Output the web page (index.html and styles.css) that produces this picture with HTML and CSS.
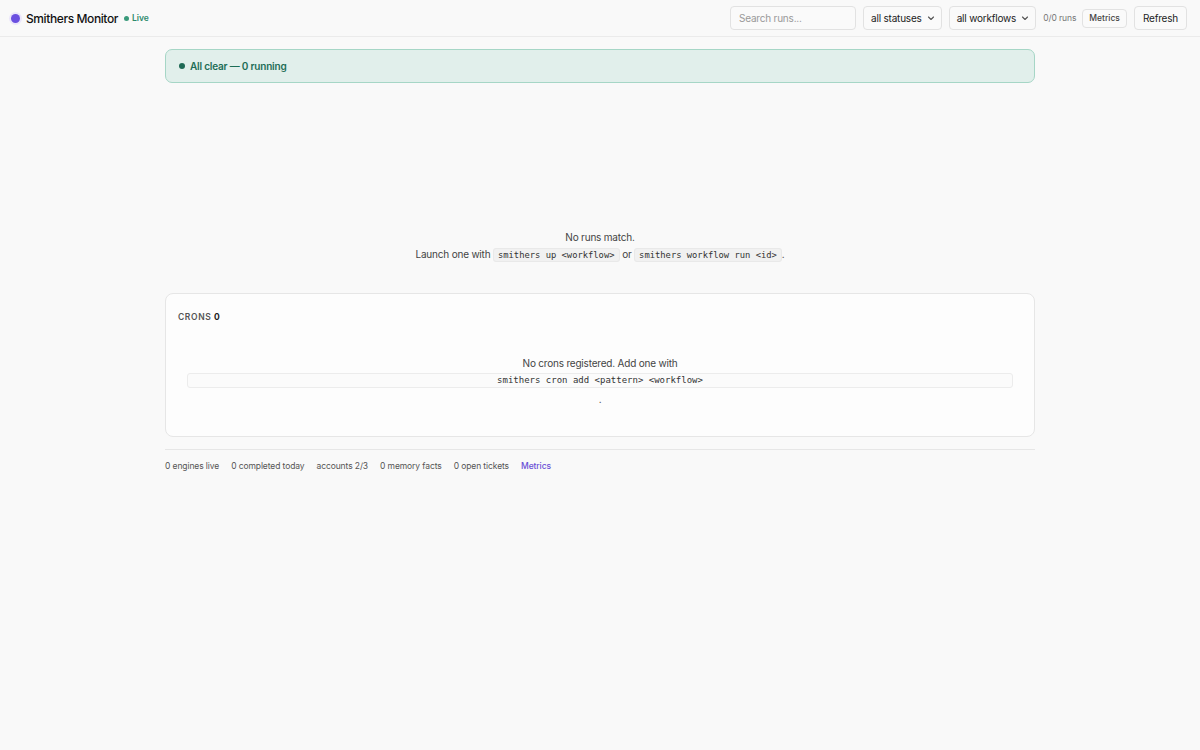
FILE: index.html
```
<!doctype html>
<html>
<head>
<meta charset="utf-8">
<title>Smithers Monitor</title>
<link rel="stylesheet" href="styles.css">
</head>
<body>
<header class="topbar">
	<div class="brand">
		<span class="brand-dot"></span>
		<span class="brand-name">Smithers Monitor</span>
		<span class="live"><span class="live-dot"></span>Live</span>
	</div>
	<div class="controls">
		<input class="search" type="text" placeholder="Search runs...">
		<button class="select">all statuses
			<svg width="8" height="8" viewBox="0 0 8 8"><path d="M1.5 3l2.5 2.5L6.5 3" fill="none" stroke="#555" stroke-width="1.1" stroke-linecap="round" stroke-linejoin="round"/></svg>
		</button>
		<button class="select">all workflows
			<svg width="8" height="8" viewBox="0 0 8 8"><path d="M1.5 3l2.5 2.5L6.5 3" fill="none" stroke="#555" stroke-width="1.1" stroke-linecap="round" stroke-linejoin="round"/></svg>
		</button>
		<span class="count">0/0 runs</span>
		<button class="btn btn-sm">Metrics</button>
		<button class="btn">Refresh</button>
	</div>
</header>

<main class="page">
	<div class="banner"><span class="banner-dot"></span>All clear — 0 running</div>

	<div class="empty">
		<p>No runs match.</p>
		<p>Launch one with <code>smithers up &lt;workflow&gt;</code> or <code>smithers workflow run &lt;id&gt;</code>.</p>
	</div>

	<section class="card">
		<h2 class="card-title">Crons <b>0</b></h2>
		<div class="card-empty">
			No crons registered. Add one with
			<code class="code-block">smithers cron add &lt;pattern&gt; &lt;workflow&gt;</code>
			<span class="dot-line">.</span>
		</div>
	</section>

	<footer class="stats">
		<span>0 engines live</span>
		<span>0 completed today</span>
		<span>accounts 2/3</span>
		<span>0 memory facts</span>
		<span>0 open tickets</span>
		<a href="#" class="stats-link">Metrics</a>
	</footer>
</main>
</body>
</html>
```
FILE: styles.css
```
*{
	box-sizing: border-box;
}
body{
	margin:0;
	background:#f9f9f9;
	color:#222;
	font-family: Inter, "Noto Sans", sans-serif;
	letter-spacing:-0.2px;
	min-height:750px;
}
button, input{
	font-family: inherit;
	letter-spacing:inherit;
}

/* top bar */
.topbar{
	height:37px;
	display:flex;
	align-items:center;
	justify-content:space-between;
	padding:0 13px 0 11px;
	border-bottom:1px solid #ebebeb;
}
.brand{
	display:flex;
	align-items:center;
}
.brand-dot{
	width:9px;
	height:9px;
	border-radius:50%;
	background:#6a4fe0;
	box-shadow:0 0 0 2px #ebe6fb;
	margin-right:6px;
}
.brand-name{
	font-size:12px;
	font-weight:500;
	letter-spacing:-0.4px;
	color:#111;
}
.live{
	display:flex;
	align-items:center;
	margin-left:6px;
	font-size:8.5px;
	font-weight:600;
	letter-spacing:0;
	color:#2d8a6c;
}
.live-dot{
	width:5px;
	height:5px;
	border-radius:50%;
	background:#3a9a7b;
	margin-right:3px;
}
.controls{
	display:flex;
	align-items:center;
}
.search{
	width:126px;
	height:24px;
	border:1px solid #e2e2e2;
	border-radius:4px;
	background:#fafafa;
	padding:0 8px;
	font-size:10px;
	color:#333;
	outline:none;
}
.search::placeholder{
	color:#999;
}
.select{
	display:flex;
	align-items:center;
	gap:5px;
	height:24px;
	margin-left:7px;
	padding:0 6px 0 7px;
	border:1px solid #e2e2e2;
	border-radius:4px;
	background:#fafafa;
	font-size:10px;
	color:#222;
}
.count{
	margin-left:7px;
	font-size:8.5px;
	letter-spacing:-0.1px;
	color:#777;
}
.btn{
	height:24px;
	margin-left:6px;
	padding:0 8px;
	border:1px solid #e2e2e2;
	border-radius:4px;
	background:#fafafa;
	font-size:10px;
	color:#222;
}
.btn-sm{
	height:19px;
	padding:0 6px;
	font-size:8.5px;
	font-weight:500;
	letter-spacing:0;
	color:#444;
}
.btn + .btn{
	margin-left:7px;
}

/* page */
.page{
	width:870px;
	margin:0 auto;
	padding-top:12px;
	display:flex;
	flex-direction:column;
	gap:12px;
}
.banner{
	height:34px;
	display:flex;
	align-items:center;
	padding:0 13px;
	border:1px solid #a6d6c6;
	border-radius:7px;
	background:#e1efeb;
	font-size:10px;
	font-weight:600;
	color:#1d6d56;
}
.banner-dot{
	width:6px;
	height:6px;
	border-radius:50%;
	background:#1f6a55;
	margin-right:5px;
}
.empty{
	padding:134px 0 17px;
	text-align:center;
	font-size:10px;
	color:#444;
}
.empty p{
	margin:0;
	line-height:17px;
}
code{
	font-family: "DejaVu Sans Mono", "Liberation Mono", monospace;
	font-size:8.8px;
	letter-spacing:0;
	background:#f1f1f1;
	border:1px solid #e9e9e9;
	border-radius:3px;
	padding:1px 4px;
	color:#333;
}

/* crons card */
.card{
	height:144px;
	border:1px solid #e6e6e6;
	border-radius:8px;
	background:#fdfdfd;
	padding:13px 12px;
}
.card-title{
	margin:0;
	font-size:8.5px;
	line-height:20px;
	font-weight:600;
	letter-spacing:0.6px;
	text-transform:uppercase;
	color:#555;
}
.card-title b{
	color:#222;
	font-weight:700;
}
.card-empty{
	padding:29px 9px 0;
	text-align:center;
	font-size:10px;
	line-height:14px;
	color:#444;
}
.code-block{
	display:block;
	margin-top:3px;
	height:15px;
	line-height:13px;
	padding:0;
	font-size:9px;
	background:#fbfbfb;
	border-color:#ececec;
}
.dot-line{
	display:block;
	margin-top:4px;
}

/* footer stats */
.stats{
	border-top:1px solid #e6e6e6;
	padding-top:11px;
	display:flex;
	gap:12px;
	font-size:8.5px;
	letter-spacing:-0.1px;
	color:#555;
}
.stats-link{
	color:#6a4fd6;
	font-weight:500;
	text-decoration:none;
}
```
